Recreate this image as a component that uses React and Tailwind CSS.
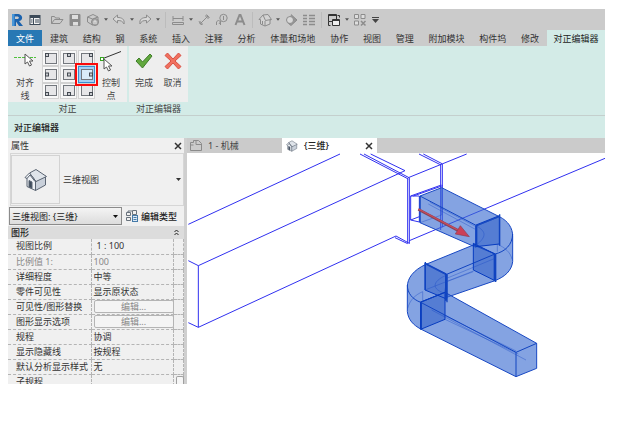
import React from "react";

const menuTabs = ["建筑", "结构", "钢", "系统", "插入", "注释", "分析", "体量和场地", "协作", "视图", "管理", "附加模块", "构件坞", "修改"];

const properties = [
  { label: "视图比例", value: "1 : 100", indent: true },
  { label: "比例值 1:", value: "100", disabled: true },
  { label: "详细程度", value: "中等" },
  { label: "零件可见性", value: "显示原状态" },
  { label: "可见性/图形替换", edit: true },
  { label: "图形显示选项", edit: true },
  { label: "规程", value: "协调" },
  { label: "显示隐藏线", value: "按规程" },
  { label: "默认分析显示样式", value: "无" },
  { label: "子规程", value: "" },
];

function Tool({ label, children, tone = "text-[#8c8c8c]" }) {
  return (
    <button type="button" aria-label={label} className={`flex h-5 w-[18px] shrink-0 items-center justify-center ${tone}`}>
      <svg viewBox="0 0 14 14" className="h-3.5 w-3.5" fill="none" stroke="currentColor" strokeWidth="1">
        {children}
      </svg>
    </button>
  );
}

function Caret({ label }) {
  return (
    <button type="button" aria-label={label} className="flex h-5 w-2 shrink-0 items-center justify-center text-[#555]">
      <svg viewBox="0 0 5 3" className="h-[3px] w-1"><path d="M0 0h5L2.5 3z" fill="currentColor" /></svg>
    </button>
  );
}

function Divider() {
  return <span className="mx-[3px] h-4 w-px shrink-0 bg-[#bcbcbc]" />;
}

function House({ className }) {
  return (
    <svg viewBox="0 0 24 24" className={className} strokeLinejoin="round" stroke="#5b6573" strokeWidth="1">
      <path d="M3 10v8.500l8.500 4V13L6 5z" fill="#eef1f5" />
      <path d="M11.500 13v9.500L21.500 17V8z" fill="#c9d0da" />
      <path d="M5.500 5 12 1.500 22.500 8.500 12 13.500z" fill="#dfe4ea" />
      <path d="M5.500 5 1 9.500l2 1 3-3.500 5 6.500 1 0z" fill="#f4f6f9" />
      <path d="M5 12.500v6.500l3 1.500v-6.500z" fill="#3f4c5d" />
    </svg>
  );
}

function QuickAccess() {
  return (
    <div className="flex h-[21px] items-center overflow-hidden bg-[#cbcbcb]">
      <button type="button" aria-label="应用程序" className="flex h-5 w-[18px] shrink-0 items-center justify-center">
        <svg viewBox="0 0 12 14" className="h-3.5 w-3">
          <path d="M1 1h5c7 0 6 7 2 7l4 5H8L5 8.500V13H1z" fill="#1b62ad" />
          <path d="M4 3.500h2c2.500 0 2.500 2.500 0 2.500H4z" fill="#cbcbcb" />
          <path d="M1 1h2.500v12H1z" fill="#4a97d8" />
        </svg>
      </button>
      <Tool label="主页" tone="text-[#3c4a58]">
        <rect x="2" y="2.500" width="10" height="9" fill="#f4f4f4" />
        <path d="M2 3.500h10M2 4.500h10M5.500 5v6M7 7h4M7 9h4M3 7h1.500M3 9h1.500" />
      </Tool>
      <span className="w-1 shrink-0" />
      <Tool label="打开"><path d="M1.500 10.500v-7h3l1 1.500h4v1.500M1.500 10.500l3-4h8.500l-3 4z" /></Tool>
      <Tool label="保存">
        <path d="M2 1.500h10v11H2z" fill="currentColor" />
        <path d="M4 2h6v4H4zM5 9h5v3.500H5z" fill="#dedede" stroke="none" />
      </Tool>
      <Tool label="同步">
        <path d="M1.500 4 7 1.500 12 4v4.500L6.500 12 1.500 9zM1.500 4l5 2L12 4M6.500 6v6" />
        <circle cx="9" cy="9" r="3.500" fill="#a9a9a9" /><path d="M8 11V8h2v3" stroke="#e6e6e6" />
      </Tool>
      <Caret label="同步选项" />
      <Tool label="撤消"><path d="M1 6l4.500-4v2.500c4 0 7.500 1.500 6.500 6.500-1.500-3-3-3.500-6.500-3.500V10z" fill="#d8d8d8" /></Tool>
      <Caret label="撤消列表" />
      <Tool label="重做"><path d="M13 6 8.500 2v2.500C4.500 4.500 1 6 2 11c1.500-3 3-3.500 6.500-3.500V10z" fill="#d8d8d8" /></Tool>
      <Caret label="重做列表" />
      <Divider />
      <Tool label="测量"><path d="M2 3v5M12 3v5M2 5.500h10M1.500 9.500h11v2h-11z" /></Tool>
      <Caret label="测量选项" />
      <Tool label="对齐尺寸标注"><path d="m3 11 8-8M2 8.500 5 12M9.500 1.500l3 3.500M3 8v3h3M8 3h3v3" /></Tool>
      <Tool label="标记"><circle cx="8.500" cy="5" r="3.700" /><path d="M8.500 3v4M1.500 12V9l2-2 2 2v3M6 8l-2 3" /></Tool>
      <Tool label="文字"><path d="M2.500 12 6.500 2h1l4 10M4.500 8.500h5" strokeWidth="2" /></Tool>
      <Divider />
      <Tool label="三维视图">
        <path d="M1 6.500 5 2l5-.5 3.500 5L12 7v4l-5 2-4.500-2V6.500z" fill="#d3d3d3" />
        <path d="M5 2l2.500 5.500L13 6.500M7 8v5M4.500 8v3.500" />
      </Tool>
      <Caret label="三维视图选项" />
      <Tool label="剖面"><path d="M7 1.500 13 7l-6 5.500L4 10" fill="#969696" /><circle cx="6" cy="7" r="3.500" fill="#d8d8d8" /></Tool>
      <Tool label="细线"><path d="M1 2.500h4M7 2.500h6M1 5.500h4M7 5.500h6M1 8.500h4M7 8.500h6M1 11.500h4M7 11.500h6" strokeWidth="1.300" /></Tool>
      <Divider />
      <Tool label="切换窗口" tone="text-[#333]">
        <path d="M1.500 1.500h8v7h-8zM1.500 2.500h8M1.500 8.500v4h2" />
        <path d="M5.500 6.500h7v6h-7z" fill="#eee" /><path d="M5.500 7.500h7M10.500 2.500h2v2" />
      </Tool>
      <Caret label="窗口列表" />
      <Tool label="关闭非活动视图">
        <path d="M1.500 1.500h4v4h-4zM8 1.500h4v4H8zM1.500 8h4v4h-4z" fill="#dedede" /><path d="m8 8 4.500 4.500M12.500 8 8 12.500" strokeWidth="1.500" />
      </Tool>
      <button type="button" aria-label="自定义快速访问工具栏" className="flex h-5 w-3 shrink-0 items-center justify-center">
        <svg viewBox="0 0 7 6" className="h-1.5 w-[7px]"><path d="M0 0h7v1H0zM0 2h7L3.500 6z" fill="#444" /></svg>
      </button>
    </div>
  );
}

function AnchorCell({ row, col }) {
  const selected = row === 1 && col === 2;
  const x = [1.5, 5.5, 9.5][col];
  const y = [1.5, 5, 8.5][row];
  return (
    <button
      type="button"
      aria-label={`对正位置 ${row + 1}-${col + 1}`}
      className={`relative flex items-center justify-center border ${selected ? "border-[#3b8ed0] bg-[#a5d0f3]" : "border-[#d2d2d2] bg-[#f8f8f8]"}`}
    >
      <svg viewBox="0 0 14 13" className="h-[13px] w-3.5" fill="none">
        <rect x="1.500" y="1.500" width="11" height="10" fill={selected ? "#d9ebf9" : "#e6e6e8"} stroke="#73777d" />
        <rect x={x} y={y} width="3" height="3" fill="#c9ccd0" stroke="#444a52" />
      </svg>
      {selected && <span className="absolute -inset-1 z-10 border-2 border-[#fa0a0a]" />}
    </button>
  );
}

function RibbonGroup({ title, children, className }) {
  return (
    <section className={`flex shrink-0 flex-col ${className}`}>
      <div className="flex h-14 bg-[#eeeeee]">{children}</div>
      <h2 className="h-[13px] text-center leading-[13px] text-[#444]">{title}</h2>
    </section>
  );
}

function RibbonButton({ icon, children, className }) {
  return (
    <button type="button" className={`flex shrink-0 flex-col items-center leading-[13px] text-[#444] ${className}`}>
      <span className="flex h-[30px] items-center justify-center">{icon}</span>
      {children}
    </button>
  );
}

const pointer = "M0 0v10l2.500-2 2 4 2-1-2-4H8z";

function Ribbon() {
  return (
    <div className="flex h-[70px] gap-0.5 border-b border-[#c4cfcd] bg-[#d3ebe7]">
      <RibbonGroup title="对正" className="w-[119px]">
        <RibbonButton
          className="w-[34px]"
          icon={
            <svg viewBox="0 0 22 18" className="h-[18px] w-[22px]" fill="none">
              <path d="M0 5.500h22" stroke="#4fc03c" strokeDasharray="3 1" />
              <path d={pointer} transform="translate(11 2)" fill="#fff" stroke="#555" />
            </svg>
          }
        >
          <span>对齐<br />线</span>
        </RibbonButton>
        <div className="mt-1 grid h-[49px] w-[53px] shrink-0 grid-cols-3 gap-x-px">
          {[0, 1, 2].map((row) => [0, 1, 2].map((col) => <AnchorCell key={`${row}${col}`} row={row} col={col} />))}
        </div>
        <RibbonButton
          className="w-8"
          icon={
            <svg viewBox="0 0 24 22" className="h-[22px] w-6" fill="none">
              <path d="m4 8.500 18-7" stroke="#333" />
              <rect x="1.500" y="7.500" width="3" height="3" fill="#fff" stroke="#35a51f" />
              <path d={pointer} transform="translate(5 9)" fill="#fff" stroke="#555" />
            </svg>
          }
        >
          <span>控制<br />点</span>
        </RibbonButton>
      </RibbonGroup>
      <RibbonGroup title="对正编辑器" className="w-[59px]">
        <RibbonButton
          className="w-[30px]"
          icon={<svg viewBox="0 0 18 16" className="h-4 w-[18px]"><path d="m1 8 3-3 3.500 4L15 1l2 2-9.500 12z" fill="#62a83e" stroke="#3f7d28" /></svg>}
        >
          完成
        </RibbonButton>
        <RibbonButton
          className="w-[27px]"
          icon={<svg viewBox="0 0 18 18" className="h-[18px] w-[18px]"><path d="m3.500 1 5.500 6L14.500 1 17 3.500 11 9l6 5.500-2.500 2.500L9 11l-5.500 6L1 14.500 7 9 1 3.500z" fill="#f0705f" stroke="#d94f42" /></svg>}
        >
          取消
        </RibbonButton>
      </RibbonGroup>
    </div>
  );
}

function Cross({ label }) {
  return (
    <button type="button" aria-label={label} className="flex h-3 w-3 shrink-0 items-center justify-center">
      <svg viewBox="0 0 8 8" className="h-2 w-2"><path d="m1 1 6 6M7 1 1 7" stroke="#333" strokeWidth="1.500" /></svg>
    </button>
  );
}

function PropertiesPanel() {
  return (
    <aside className="flex w-[176px] shrink-0 flex-col bg-[#f0f0f0] text-[#333]">
      <div className="flex h-[15px] shrink-0 items-center justify-between pl-[3px]">
        <h2>属性</h2>
        <Cross label="关闭属性" />
      </div>
      <button type="button" className="ml-0.5 flex h-[53px] shrink-0 items-center border border-[#d6d6d6] pr-0.5">
        <span className="flex h-[49px] w-[49px] shrink-0 items-center justify-center border border-[#d3d3d3]">
          <House className="h-6 w-6" />
        </span>
        <span className="grow pl-[3px] text-left">三维视图</span>
        <svg viewBox="0 0 5 3" className="h-[3px] w-[5px]"><path d="M0 0h5L2.500 3z" fill="#333" /></svg>
      </button>
      <div className="flex h-5 shrink-0 items-center">
        <div className="relative ml-px w-[113px]">
          <select aria-label="视图类型" className="block h-[18px] w-full appearance-none border border-[#8b8b8b] bg-gradient-to-b from-[#f4f4f4] to-[#dcdcdc] pl-0.5 text-[#222]">
            <option>三维视图: {"{三维}"}</option>
          </select>
          <svg viewBox="0 0 5 3" className="pointer-events-none absolute top-2 right-1 h-[3px] w-[5px]"><path d="M0 0h5L2.500 3z" fill="#111" /></svg>
        </div>
        <button type="button" className="flex items-center gap-[3px] pl-1 font-medium text-[#222]">
          <svg viewBox="0 0 12 12" className="h-3 w-3" fill="none" stroke="#68727c">
            <path d="M.5 2.500h4v3h-4zM6.500.5h4v4h-4zM.5 7.500h4v3h-4zM2 2.500V1h4" />
            <rect x="6.500" y="5.500" width="5" height="6" fill="#dce9f6" stroke="#457aa8" /><path d="M7.500 7.500h3M7.500 9.500h3" stroke="#457aa8" />
          </svg>
          编辑类型
        </button>
      </div>
      <div className="flex h-[13px] shrink-0 items-center justify-between bg-[#dcdcdc] pr-[5px] pl-[3px] font-medium text-[#222]">
        <h3>图形</h3>
        <svg viewBox="0 0 5 7" className="h-[7px] w-[5px]" fill="none" stroke="#222"><path d="m.5 3 2-2 2 2M.5 6l2-2 2 2" /></svg>
      </div>
      <div className="relative min-h-0 grow overflow-hidden">
        <table className="w-full table-fixed border-collapse">
          <colgroup>
            <col className="w-[83px]" />
            <col />
            <col className="w-2.5" />
          </colgroup>
          <tbody>
            {properties.map((p) => (
              <tr key={p.label} className={`h-[15px] last:h-2.5 ${p.disabled ? "text-[#888]" : ""}`}>
                <th scope="row" className="border-r border-b border-dashed border-[#b4b4b4] p-0 pl-2 text-left leading-[14px] font-normal whitespace-nowrap">
                  {p.label}
                </th>
                <td className={`border-r border-b border-dashed border-[#b4b4b4] p-0 leading-[14px] ${p.indent ? "pl-[5px]" : "pl-0.5"}`}>
                  {p.edit ? (
                    <button type="button" aria-label={`编辑${p.label}`} className="block h-[13px] w-20 rounded-xs border border-[#b4b4b4] bg-[#f4f4f4] text-center leading-[11px] text-[#888]">编辑...</button>
                  ) : (
                    p.value
                  )}
                </td>
                <td className="border-r border-b border-dashed border-[#b4b4b4] p-0" />
              </tr>
            ))}
          </tbody>
        </table>
        <span className="absolute right-0 bottom-0 h-2 w-2 rounded-t-xs border border-b-0 border-[#a0a0a0] bg-[#f6f6f6]" />
      </div>
    </aside>
  );
}

function Model() {
  return (
    <svg viewBox="-579 69 1254 690" className="block h-auto w-full" fill="none" role="img" aria-label="风管三维模型">
      <g stroke="#3030f0" strokeWidth="3">
        <path d="M-575 283-120 72M-575 392l30 15v185M-575 578l30 14M-545 407 75 122M-545 592 48 318" />
        <path d="M-60 72 85 147M-48 72 87 143M-28 72 75 122M48 318l40 22M45 323l38 18" />
        <path d="M83 146v194M88 143v198M85 143 260 72M117 72l66 33M130 72l56 29M182 102v198M187 102v190" />
        <path d="M88 332 675 85M92 198v72l26 6v-78zM92 198l92-33M100 198l88-31M92 270l26-10" />
      </g>
      <g stroke="#1848c4" strokeWidth="3" fill="#386bd0" fillOpacity=".62" strokeLinejoin="round">
        <path d="M120 198 185 173 358 260 288 288V352L120 278z" />
        <path d="M358 260C385 273 398 295 398 318V395C395 422 375 440 345 452V372L280 342 288 350V288z" />
        <path d="M138 403 280 345 345 372V452L200 502V435z" />
        <path d="M138 403C100 420 82 445 82 470V545C85 570 100 585 122 597V517L195 487 200 435z" />
        <path d="M122 517 195 487 470 640V715L408 740 122 597z" />
      </g>
      <g fill="#1d4fc0" fillOpacity=".45" stroke="#063bc0" strokeWidth="3">
        <path d="M288 285 358 257V342L288 350zM280 340 345 372V452L280 420z" />
        <path d="M135 399 200 432V507L135 480zM122 516 195 487V568L122 598z" />
      </g>
      <g stroke="#1144c0" strokeWidth="3">
        <path d="M120 198 288 286M120 198v80M345 372C375 365 397 345 398 312M200 433 345 372" />
        <path d="M122 517C98 508 82 490 82 465M122 517 408 667 470 640M408 667v73" />
        <path d="M359 253v94M343 370v84M347 372v84M290 285v64M136 396v84M197 432v80M201 433v84M124 514v86" strokeWidth="4" />
      </g>
      <g stroke="#1848c4" strokeOpacity=".6" strokeWidth="2">
        <path d="M185 173v82L120 278M150 217 288 290M145 222 290 300M288 287C320 305 320 320 288 346M352 365v-22C375 352 392 368 396 388" />
        <path d="M135 480 280 423M200 445 345 385M200 455 280 425M198 436C155 455 155 478 195 490M83 535C90 510 105 495 128 485v30" />
        <path d="M155 540 438 690M195 568 415 672M190 555 408 663" />
      </g>
      <path d="m115 238 122 65" stroke="#834458" strokeWidth="8" />
      <path d="m115 237 122 65" stroke="#c84a5b" strokeWidth="4" />
      <path d="m241 287 27 33-42-8z" fill="#cb4058" stroke="#8a3d51" strokeWidth="2" />
    </svg>
  );
}

function Viewport() {
  return (
    <main className="flex min-w-0 grow flex-col bg-white">
      <div role="tablist" className="flex h-[15px] shrink-0 bg-[#cbcbcb] text-[#444]">
        <button type="button" role="tab" aria-selected="false" className="flex w-[95px] items-center gap-1.5 pl-[3px]">
          <svg viewBox="0 0 12 11" className="h-[11px] w-3" fill="none" stroke="#8b8b8b"><path d="M.5 2.500h3v-2h5l3 3v7H.5zM6 .5v4h5.500M3.500 5h-3" /></svg>
          1 - 机械
        </button>
        <div className="flex w-[95px] items-center justify-between bg-white pr-0.5 pl-1">
          <button type="button" role="tab" aria-selected="true" className="flex items-center gap-1.5 font-medium text-[#222]">
            <House className="h-3 w-3" />
            {"{三维}"}
          </button>
          <Cross label="关闭视图" />
        </div>
      </div>
      <Model />
    </main>
  );
}

export default function App() {
  return (
    <div className="bg-white pt-[9px] pr-3 pb-[38px] pl-2 font-['Noto_Sans','Noto_Sans_CJK_SC',sans-serif] text-[9px] leading-[13px]">
      <QuickAccess />
      <nav className="flex h-4 bg-[#cbcbcb] text-[#333]">
        <button type="button" className="w-[34px] shrink-0 bg-[#2878b4] text-white">文件</button>
        <div className="flex grow justify-between px-2">
          {menuTabs.map((t) => <button key={t} type="button" className="whitespace-nowrap">{t}</button>)}
        </div>
        <button type="button" className="w-[58px] shrink-0 bg-[#d3ebe7] text-[#222]">对正编辑器</button>
      </nav>
      <Ribbon />
      <div className="flex h-[22px] items-center bg-[#d3ebe7] px-1.5 font-medium text-[#222]">对正编辑器</div>
      <div className="flex h-[246px] overflow-hidden">
        <PropertiesPanel />
        <div className="w-[3px] shrink-0 bg-[#cfcfcf]" />
        <Viewport />
      </div>
    </div>
  );
}
